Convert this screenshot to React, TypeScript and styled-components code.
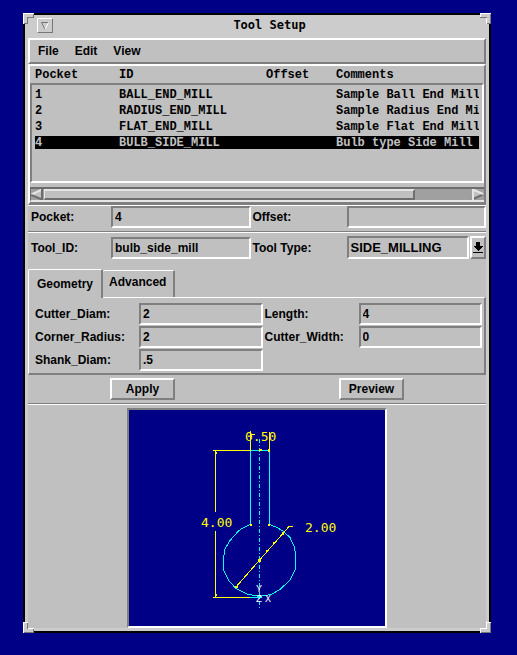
import React, { useRef, useState } from "react";
import styled, { createGlobalStyle, css } from "styled-components";

const color = {
  desktop: "#000087",
  frame: "#cccccc",
  face: "#c0c0c0",
  light: "#ffffff",
  dark: "#7f7f7f",
  trough: "#a0a0a0",
};

const sans = `"Liberation Sans", Arial, sans-serif`;
const mono = `"Liberation Mono", "Courier New", monospace`;

const GlobalStyle = createGlobalStyle`
  *, *::before, *::after { box-sizing: border-box; }
  body {
    margin: 0;
    background: ${color.desktop};
    color: #000;
    font: bold 12px/16px ${sans};
  }
  button, input, select { font: inherit; color: inherit; margin: 0; border-radius: 0; }
`;

const raised = css`
  border: 2px solid;
  border-color: ${color.light} ${color.dark} ${color.dark} ${color.light};
`;

const sunken = css`
  border: 2px solid;
  border-color: ${color.dark} ${color.light} ${color.light} ${color.dark};
`;

const Desktop = styled.div`
  padding: 13px 26px 22px 23px;
`;

const Window = styled.main`
  position: relative;
  border: 2px solid #000;
  background: ${color.frame};
  padding: 0 3px 3px;
`;

const Corner = styled.svg<{ $right?: boolean; $bottom?: boolean }>`
  position: absolute;
  ${(p) => (p.$right ? "right: -2px;" : "left: -2px;")}
  ${(p) => (p.$bottom ? "bottom: -2px;" : "top: -2px;")}
`;

const TitleBar = styled.header`
  display: flex;
  align-items: flex-start;
  height: 23px;
  padding: 3px 0 0 9px;
`;

const MenuButton = styled.button`
  display: flex;
  align-items: center;
  justify-content: center;
  width: 16px;
  height: 15px;
  padding: 0;
  background: ${color.frame};
  border: 1px solid;
  border-color: #fff #777 #777 #fff;
`;

const Title = styled.h1`
  flex: 1;
  margin: 0;
  text-align: center;
  font: bold 12px/14px "DejaVu Sans Mono", ${mono};
`;

const Body = styled.div`
  background: ${color.face};
`;

const MenuBar = styled.nav`
  ${raised}
  display: flex;
  gap: 16px;
  height: 26px;
  padding: 0 8px;
`;

const MenuItem = styled.button`
  padding: 0;
  border: 0;
  background: none;
`;

const ListPanel = styled.section`
  ${raised}
  border-bottom-width: 3px;
`;

const ToolTable = styled.table`
  display: block;
  font: bold 12px/15px ${mono};
  text-align: left;
  white-space: nowrap;
`;

const TableHead = styled.thead`
  display: block;
  padding: 2px 5px 2px 5px;
`;

const TableBody = styled.tbody`
  ${sunken}
  display: flex;
  flex-direction: column;
  gap: 3px;
  height: 100px;
  padding: 3px;
`;

const ToolRow = styled.tr<{ $selected?: boolean }>`
  display: grid;
  grid-template-columns: 84px 147px 70px minmax(0, 1fr);
  height: 13px;
  background: ${(p) => (p.$selected ? "#000" : "transparent")};
  color: ${(p) => (p.$selected ? color.face : "#000")};

  th, td {
    padding: 0;
    overflow-x: clip;
    font-weight: bold;
  }
`;

const ScrollBar = styled.div`
  display: flex;
  height: 15px;
  margin-top: 4px;
  background: ${color.trough};
  border-top: 2px solid #6e6e6e;
  border-bottom: 2px solid #e6e6e6;
  border-left: 1px solid #6e6e6e;
`;

const ScrollArrow = styled.button`
  display: flex;
  width: 13px;
  padding: 0;
  border: 0;
  background: none;
`;

const ScrollTrack = styled.div`
  flex: 1;
`;

const ScrollThumb = styled.div`
  width: 87%;
  height: 11px;
  background: ${color.face};
  border: 1px solid;
  border-width: 2px 2px 2px 1px;
  border-color: #e6e6e6 #6e6e6e #6e6e6e #e6e6e6;
`;

const FormRow = styled.div<{ $spaced?: boolean }>`
  display: grid;
  grid-template-columns: 80px minmax(0, 1fr) 96px minmax(0, 1fr);
  align-items: center;
  padding: ${(p) => (p.$spaced ? "3px 0 10px 3px" : "0 0 3px 3px")};
  ${(p) => !p.$spaced && "border-top: 1px solid #fff;"}
`;

const Label = styled.label<{ $second?: boolean }>`
  padding-left: ${(p) => (p.$second ? "2px" : "0")};
  white-space: nowrap;
`;

const TextField = styled.input`
  ${sunken}
  width: 100%;
  height: 22px;
  padding: 0 2px;
  background: ${color.face};
  outline: none;
`;

const Combo = styled.div`
  display: flex;
  gap: 1px;
`;

const ComboSelect = styled.select`
  ${sunken}
  appearance: none;
  flex: 1;
  min-width: 0;
  height: 23px;
  padding: 0 2px;
  background: ${color.face};
  font-size: 13px;
  outline: none;
`;

const ComboButton = styled.button`
  ${raised}
  display: flex;
  align-items: center;
  justify-content: center;
  width: 16px;
  height: 23px;
  padding: 0;
  background: ${color.face};
`;

const Separator = styled.hr`
  height: 2px;
  margin: 0;
  border: 0;
  border-top: 1px solid ${color.dark};
  border-bottom: 1px solid ${color.light};
`;

const TabList = styled.div`
  display: flex;
  align-items: flex-end;
`;

const Tab = styled.button<{ $active: boolean }>`
  position: relative;
  height: ${(p) => (p.$active ? "29px" : "27px")};
  margin-bottom: ${(p) => (p.$active ? "-1px" : "0")};
  padding: ${(p) => (p.$active ? "0 8px" : "0 7px 4px 6px")};
  background: ${color.face};
  border: 0 solid;
  border-width: 1px 2px 0 1px;
  border-color: ${color.light} ${color.dark} ${color.dark} ${color.light};
  border-radius: 2px 2px 0 0;
  z-index: ${(p) => (p.$active ? 1 : 0)};

  & + & {
    border-left-width: 0;
  }
`;

const TabPanel = styled.div`
  display: grid;
  grid-template-columns: 104px minmax(0, 1fr) 96px minmax(0, 1fr);
  grid-auto-rows: 22px;
  row-gap: 1px;
  align-items: center;
  min-height: 78px;
  padding: 5px 2px 2px 6px;
  border: 2px solid;
  border-width: 1px 2px 2px 1px;
  border-color: ${color.light} ${color.dark} ${color.dark} ${color.light};
`;

const ButtonRow = styled.div`
  display: grid;
  grid-template-columns: 1fr 1fr;
  justify-items: center;
  padding: 3px 0;
`;

const PushButton = styled.button`
  ${raised}
  width: 65px;
  height: 22px;
  padding: 0;
  background: ${color.face};
`;

const PreviewArea = styled.div`
  padding-top: 3px;
`;

const Canvas = styled.div`
  ${sunken}
  max-width: 260px;
  margin: 0 auto;
  background: ${color.desktop};
`;

const Drawing = styled.svg`
  display: block;
  width: 100%;
  height: auto;
`;

const Dimension = styled.text`
  font: normal 13px "DejaVu Sans Mono", ${mono};
  fill: #ffff00;
`;

const Axis = styled.text`
  font: normal 10px ${mono};
  fill: #ffffff;
`;

const tools = [
  { pocket: "1", id: "BALL_END_MILL", offset: "", comments: "Sample Ball End Mill" },
  { pocket: "2", id: "RADIUS_END_MILL", offset: "", comments: "Sample Radius End Mill" },
  { pocket: "3", id: "FLAT_END_MILL", offset: "", comments: "Sample Flat End Mill" },
  { pocket: "4", id: "BULB_SIDE_MILL", offset: "", comments: "Bulb type Side Mill" },
];

function FrameCorners() {
  return (
    <>
      <Corner width="11" height="11" shapeRendering="crispEdges" aria-hidden="true">
        <path d="M0 0H11V5H5V11H0Z" fill="#ccc" />
        <path d="M0 .5H11M.5 0V11" stroke="#fff" />
        <path d="M5 4.5H11M4.5 4V11M10.5 1V5M1 10.5H5" stroke="#777" />
      </Corner>
      <Corner $right width="11" height="11" shapeRendering="crispEdges" aria-hidden="true">
        <path d="M0 0H11V11H6V5H0Z" fill="#ccc" />
        <path d="M0 .5H11M.5 0V4M6.5 5V11" stroke="#fff" />
        <path d="M0 4.5H7M10.5 1V11M7 10.5H11" stroke="#777" />
      </Corner>
      <Corner $bottom width="11" height="11" shapeRendering="crispEdges" aria-hidden="true">
        <path d="M0 0H5V6H11V11H0Z" fill="#ccc" />
        <path d="M0 .5H5M.5 0V11M5 6.5H11" stroke="#fff" />
        <path d="M4.5 1V7M10.5 7V11M1 10.5H11" stroke="#777" />
      </Corner>
      <Corner $right $bottom width="11" height="11" shapeRendering="crispEdges" aria-hidden="true">
        <path d="M6 0H11V11H0V6H6Z" fill="#ccc" />
        <path d="M6 .5H11M6.5 0V6M0 6.5H7M.5 6V11" stroke="#fff" />
        <path d="M10.5 1V11M1 10.5H11" stroke="#777" />
      </Corner>
    </>
  );
}

function CutterDrawing() {
  return (
    <Drawing viewBox="129 410 256 216" role="img" aria-label="Bulb side mill profile">
      <g fill="none" stroke="#00ffff" shapeRendering="crispEdges">
        <path d="M251 450.5H269M250.5 451V524.5M269.5 451V524.5" />
        <path d="M250.5 524.5L243.5 527.5L238.5 531L230 540.5L225 549L223.5 558V570L229 581L236 588.5L247 594L259.5 596.5L271 594.5L280 589.5L290 580L295 570.5L296 559L294.5 547L290 537.5L283.5 531.5L277 527.5L269.5 524.5" />
        <path d="M259.5 439V608" strokeDasharray="4 2 1 2" />
      </g>
      <g fill="none" stroke="#ffff00" shapeRendering="crispEdges">
        <path d="M213 450.5H251M213 597.5H251M215.5 450V512M215.5 531V597" />
        <path d="M250.5 431V451M269.5 432V451M251 434.5H255" />
        <path d="M235.5 587.5L289 526.5H293" />
      </g>
      <g fill="#ffff00" shapeRendering="crispEdges">
        <path d="M258 559h3v3h-3zM282 532h2v3h-2zM235 586h3v2h-3zM273 542h2v2h-2zM266 550h2v2h-2zM250 524h2v2h-2zM268 524h2v2h-2zM259 449h3v2h-3zM268 449h2v3h-2zM216 452h1v2h-1zM216 594h1v2h-1z" />
      </g>
      <path d="M250 597.5H262" stroke="#00ffff" shapeRendering="crispEdges" />
      <Dimension x="245" y="441">0.50</Dimension>
      <Dimension x="201" y="527">4.00</Dimension>
      <Dimension x="305" y="532">2.00</Dimension>
      <Axis x="256" y="592">Y</Axis>
      <Axis x="256" y="602">Z</Axis>
      <Axis x="265" y="602">X</Axis>
    </Drawing>
  );
}

function Field({ id, label, value, second }: { id: string; label: string; value: string; second?: boolean }) {
  return (
    <>
      <Label htmlFor={id} $second={second}>{label}</Label>
      <TextField id={id} defaultValue={value} />
    </>
  );
}

export default function App() {
  const [selected, setSelected] = useState("4");
  const [tab, setTab] = useState("Geometry");
  const typeRef = useRef<HTMLSelectElement>(null);

  return (
    <Desktop>
      <GlobalStyle />
      <Window>
        <TitleBar>
          <MenuButton aria-label="Window menu">
            <svg width="8" height="8" aria-hidden="true">
              <path d="M.5 .5H7.5L4 7.5Z" fill="#ccc" />
              <path d="M7.5 .5H.5L4 7.5" fill="none" stroke="#777" />
              <path d="M7.5 .5L4 7.5" stroke="#fff" />
            </svg>
          </MenuButton>
          <Title>Tool Setup</Title>
        </TitleBar>
        <Body>
          <MenuBar aria-label="Main">
            <MenuItem>File</MenuItem>
            <MenuItem>Edit</MenuItem>
            <MenuItem>View</MenuItem>
          </MenuBar>

          <ListPanel>
            <ToolTable>
              <TableHead>
                <ToolRow>
                  <th scope="col">Pocket</th>
                  <th scope="col">ID</th>
                  <th scope="col">Offset</th>
                  <th scope="col">Comments</th>
                </ToolRow>
              </TableHead>
              <TableBody>
                {tools.map((t) => (
                  <ToolRow
                    key={t.pocket}
                    $selected={t.pocket === selected}
                    aria-selected={t.pocket === selected}
                    onClick={() => setSelected(t.pocket)}
                  >
                    <td>{t.pocket}</td>
                    <td>{t.id}</td>
                    <td>{t.offset}</td>
                    <td>{t.comments}</td>
                  </ToolRow>
                ))}
              </TableBody>
            </ToolTable>
            <ScrollBar>
              <ScrollArrow aria-label="Scroll left">
                <svg width="13" height="11" aria-hidden="true">
                  <path d="M0 5.5L11 0V11Z" fill="#c0c0c0" />
                  <path d="M0 5.5L11 .5" stroke="#e6e6e6" strokeWidth="2" />
                  <path d="M0 6L11 10.5V0" fill="none" stroke="#6e6e6e" strokeWidth="2" />
                </svg>
              </ScrollArrow>
              <ScrollTrack>
                <ScrollThumb />
              </ScrollTrack>
              <ScrollArrow aria-label="Scroll right">
                <svg width="13" height="11" aria-hidden="true">
                  <path d="M1 0L12 5.5L1 11Z" fill="#c0c0c0" />
                  <path d="M12 5.5L1 10.5" stroke="#6e6e6e" strokeWidth="2" />
                  <path d="M12 5L2 .5V11" fill="none" stroke="#e6e6e6" strokeWidth="2" />
                </svg>
              </ScrollArrow>
            </ScrollBar>
          </ListPanel>

          <FormRow>
            <Field id="pocket" label="Pocket:" value="4" />
            <Field id="offset" label="Offset:" value="" second />
          </FormRow>
          <Separator />
          <FormRow $spaced>
            <Field id="tool-id" label="Tool_ID:" value="bulb_side_mill" />
            <Label htmlFor="tool-type" $second>Tool Type:</Label>
            <Combo>
              <ComboSelect id="tool-type" ref={typeRef} defaultValue="SIDE_MILLING">
                <option>SIDE_MILLING</option>
              </ComboSelect>
              <ComboButton aria-label="Show tool types" onClick={() => typeRef.current?.showPicker()}>
                <svg width="10" height="12" shapeRendering="crispEdges" aria-hidden="true">
                  <path d="M3 0H7V4H10L5 9L0 4H3ZM0 10H10V11H0Z" />
                </svg>
              </ComboButton>
            </Combo>
          </FormRow>

          <TabList role="tablist">
            {["Geometry", "Advanced"].map((name) => (
              <Tab
                key={name}
                role="tab"
                aria-selected={tab === name}
                $active={tab === name}
                onClick={() => setTab(name)}
              >
                {name}
              </Tab>
            ))}
          </TabList>
          <TabPanel role="tabpanel" aria-label={tab}>
            {tab === "Geometry" && (
              <>
                <Field id="cutter-diam" label="Cutter_Diam:" value="2" />
                <Field id="length" label="Length:" value="4" second />
                <Field id="corner-radius" label="Corner_Radius:" value="2" />
                <Field id="cutter-width" label="Cutter_Width:" value="0" second />
                <Field id="shank-diam" label="Shank_Diam:" value=".5" />
              </>
            )}
          </TabPanel>

          <ButtonRow>
            <PushButton>Apply</PushButton>
            <PushButton>Preview</PushButton>
          </ButtonRow>
          <Separator />
          <PreviewArea>
            <Canvas>
              <CutterDrawing />
            </Canvas>
          </PreviewArea>
        </Body>
        <FrameCorners />
      </Window>
    </Desktop>
  );
}
